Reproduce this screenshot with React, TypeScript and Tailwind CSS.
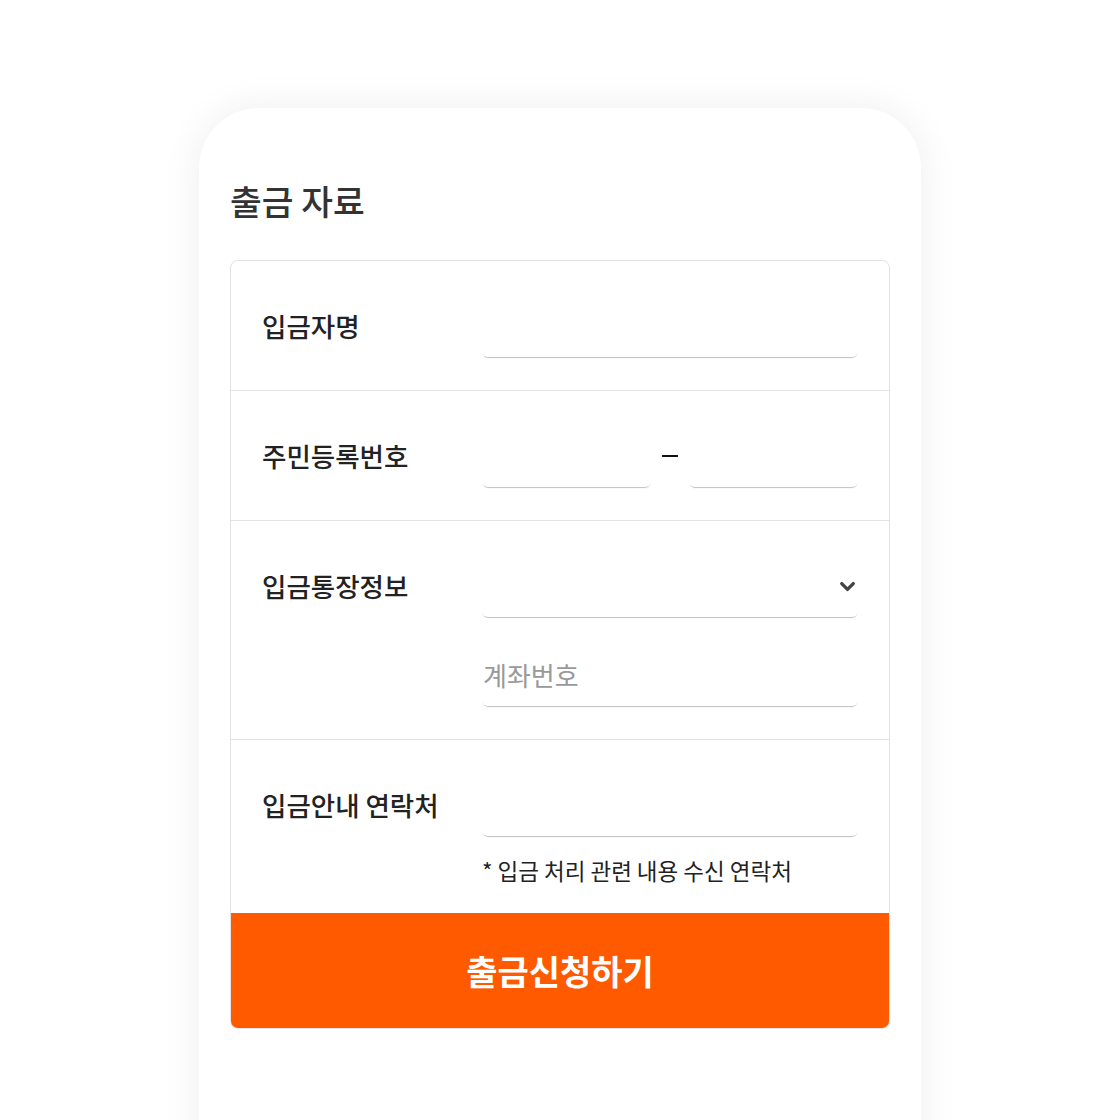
import { ChevronDown } from "lucide-react";

const font = { fontFamily: '"Noto Sans CJK KR", "Noto Sans", sans-serif' };

function Field({ placeholder, children }: { placeholder?: string; children?: React.ReactNode }) {
  return (
    <div className="relative h-[50px] w-full rounded-[6px] bg-white shadow-[0_2px_1px_-1px_rgba(0,0,0,0.25)] flex items-center">
      <input
        className="w-full h-full bg-transparent pl-[1px] pb-[14px] text-[26px] text-[#333] placeholder-[#999] outline-none"
        placeholder={placeholder}
        style={font}
      />
      {children}
    </div>
  );
}

function Row({ label, children, last }: { label: string; children: React.ReactNode; last?: boolean }) {
  return (
    <div className={`flex items-start pl-[31px] pr-[31px] pt-[46px] ${last ? "pb-[30px]" : "pb-[33px] border-b border-[#e4e4e4]"}`}>
      <div className="w-[220px] shrink-0 text-[26.5px] leading-[38px] font-medium text-[#222]">{label}</div>
      <div className="flex-1 flex flex-col">{children}</div>
    </div>
  );
}

export default function App() {
  return (
    <div className="w-[1120px] h-[1120px] overflow-hidden bg-white flex justify-center pt-[108px]" style={font}>
      <div className="w-[722px] h-[1100px] bg-white rounded-t-[60px] shadow-[0_0_40px_rgba(0,0,0,0.07)] px-[31px] pt-[70px]">
        <h1 className="text-[34.5px] leading-[44px] font-medium text-[#333] mb-[38px]">출금 자료</h1>
        <div className="border border-[#e3e3e3] rounded-[8px] overflow-hidden">
          <Row label="입금자명">
            <Field />
          </Row>
          <Row label="주민등록번호">
            <div className="flex items-start">
              <div className="w-[169px]"><Field /></div>
              <div className="w-[38px] h-[38px] flex items-center justify-center">
                <span className="block w-[16px] h-[2px] bg-[#111]" />
              </div>
              <div className="w-[169px]"><Field /></div>
            </div>
          </Row>
          <Row label="입금통장정보">
            <Field>
              <ChevronDown className="absolute right-[-1px] top-[8px] text-[#444]" size={23} strokeWidth={3.5} />
            </Field>
            <div className="h-[39px]" />
            <Field placeholder="계좌번호" />
          </Row>
          <Row label="입금안내 연락처" last>
            <Field />
            <div className="mt-[21px] text-[22.5px] leading-[26px] text-[#222]">* 입금 처리 관련 내용 수신 연락처</div>
          </Row>
          <button className="w-full h-[115px] bg-[#ff5a00] text-white text-[34px] font-bold" style={font}>
            출금신청하기
          </button>
        </div>
      </div>
    </div>
  );
}
